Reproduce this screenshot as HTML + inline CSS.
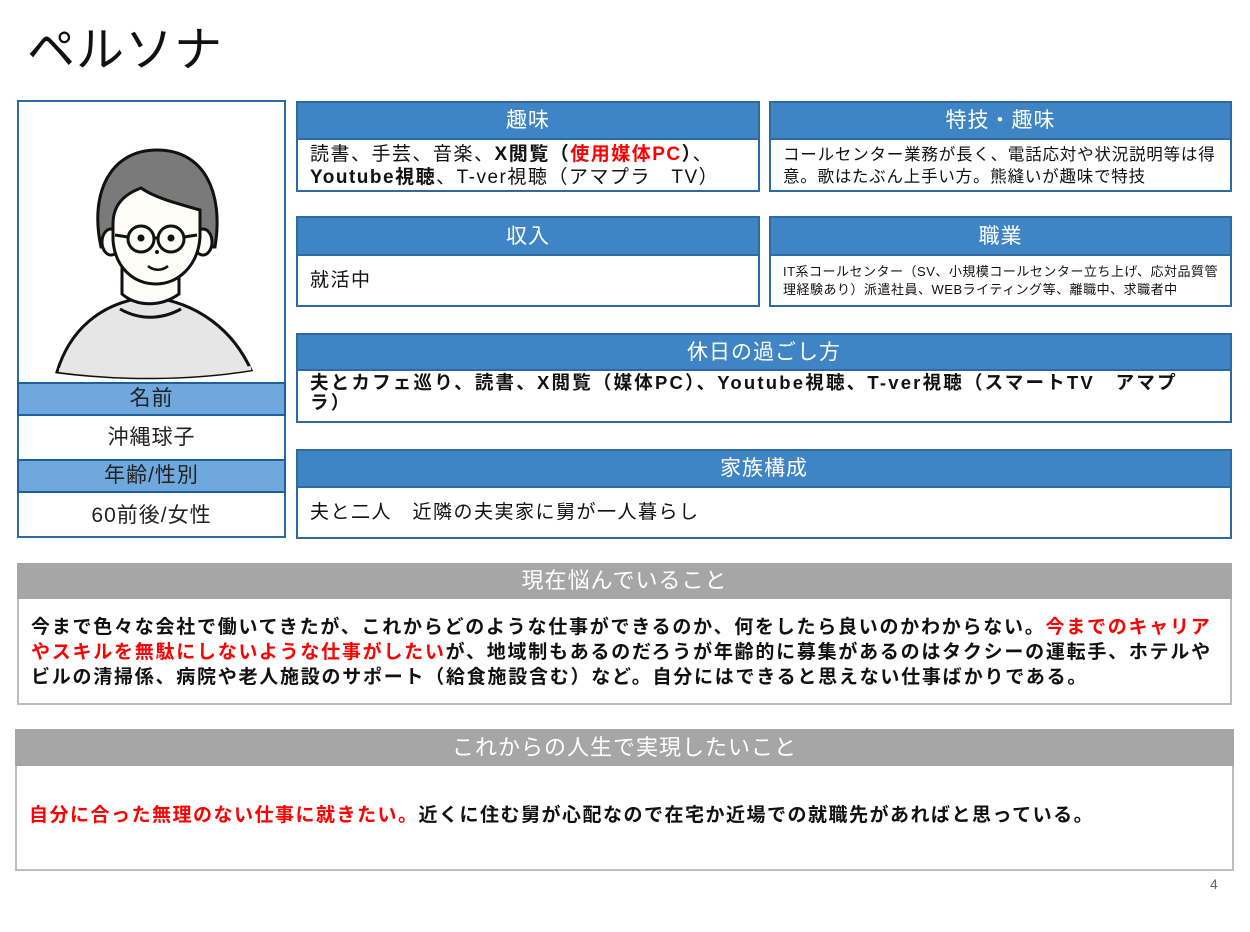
<!DOCTYPE html>
<html><head><meta charset="utf-8"><style>
*{margin:0;padding:0;box-sizing:border-box}
body{width:1250px;height:932px;background:#fff;position:relative;font-family:"Liberation Sans","Noto Sans CJK JP",sans-serif;color:#111;overflow:hidden}
.a{position:absolute}
.hd{position:absolute;background:#3f85c6;border:2px solid #2c69a5;color:#fff;font-size:21px;text-align:center;letter-spacing:1px}
.bd{position:absolute;border:2px solid #2c69a5;border-top:none;background:#fff;font-size:19px;line-height:23px;padding:0 12px;letter-spacing:1.5px}
.lh{position:absolute;left:17px;width:269px;background:#6fa8dc;border:2px solid #1f5f9e;font-size:21px;text-align:center;color:#222;letter-spacing:1px}
.lv{position:absolute;left:17px;width:269px;font-size:21px;text-align:center;color:#222;letter-spacing:1px}
.gh{position:absolute;background:#a6a6a6;color:#fff;font-size:22px;text-align:center;letter-spacing:1px}
.gb{position:absolute;border:2px solid #bdbdbd;border-top:none;background:#fff;font-weight:bold;font-size:19px;line-height:25px;letter-spacing:1.5px}
.r{color:#f00}
</style></head><body>
<div class="a" style="left:27px;top:10px;font-size:48px;color:#111;letter-spacing:1px">ペルソナ</div>

<div class="a" style="left:17px;top:100px;width:269px;height:438px;border:2px solid #2c69a5"></div>
<svg class="a" style="left:19px;top:102px" width="265" height="280" viewBox="0 0 265 280">
<path d="M38 270 C50 230 80 200 130 195 C180 200 215 230 232 268 C170 278 100 278 38 270Z" fill="#e6e6e6" stroke="#111" stroke-width="3"/>
<path d="M40 268 C100 276 170 276 232 266" fill="none" stroke="#e6e6e6" stroke-width="4"/>
<path d="M103 160 L103 192 C118 205 142 205 160 192 L160 160Z" fill="#fdfcf7" stroke="#111" stroke-width="3"/>
<path d="M101 207 C120 218 142 218 162 207" fill="none" stroke="#111" stroke-width="3"/>
<path d="M82 145 C70 90 92 48 138 48 C185 48 205 90 196 145 Z" fill="#7a7a7a" stroke="#111" stroke-width="3"/>
<ellipse cx="92" cy="140" rx="9" ry="13" fill="#fdfcf7" stroke="#111" stroke-width="3"/>
<ellipse cx="184" cy="140" rx="9" ry="13" fill="#fdfcf7" stroke="#111" stroke-width="3"/>
<path d="M94 122 C94 102 106 92 122 86 C136 96 160 102 181 108 L181 135 C179 165 158 182 137 182 C115 182 96 166 94 138Z" fill="#fdfcf7" stroke="#111" stroke-width="3"/>
<circle cx="122" cy="137" r="13" fill="none" stroke="#111" stroke-width="3"/>
<circle cx="152" cy="137" r="13" fill="none" stroke="#111" stroke-width="3"/>
<path d="M135 136 L139 136 M109 135 L96 133 M165 135 L178 133" stroke="#111" stroke-width="3"/>
<circle cx="122" cy="136" r="3.5" fill="#111"/><circle cx="152" cy="136" r="3.5" fill="#111"/>
<circle cx="138" cy="150" r="2" fill="#111"/>
<path d="M129 164 C135 169 143 169 149 164" fill="none" stroke="#111" stroke-width="2.5"/>
</svg>
<div class="lh" style="top:382px;height:34px;line-height:30px">名前</div>
<div class="lv" style="top:416px;height:44px;line-height:44px;border-left:2px solid #2c69a5;border-right:2px solid #2c69a5">沖縄球子</div>
<div class="lh" style="top:459px;height:34px;line-height:30px">年齢/性別</div>
<div class="lv" style="top:493px;height:45px;line-height:45px;border:2px solid #2c69a5;border-top:none">60前後/女性</div>

<div class="hd" style="left:296px;top:101px;width:464px;height:39px;line-height:36px">趣味</div>
<div class="bd" style="left:296px;top:140px;width:464px;height:52px;padding-top:3px">読書、手芸、音楽、<b>X閲覧（<span class="r">使用媒体PC</span>）</b>、<br><b>Youtube視聴</b>、T-ver視聴（アマプラ　TV）</div>
<div class="hd" style="left:769px;top:101px;width:463px;height:39px;line-height:36px">特技・趣味</div>
<div class="bd" style="left:769px;top:140px;width:463px;height:52px;font-size:16.5px;line-height:22px;padding-top:4px;letter-spacing:0.8px">コールセンター業務が長く、電話応対や状況説明等は得意。歌はたぶん上手い方。熊縫いが趣味で特技</div>

<div class="hd" style="left:296px;top:216px;width:464px;height:40px;line-height:37px">収入</div>
<div class="bd" style="left:296px;top:256px;width:464px;height:51px;line-height:50px">就活中</div>
<div class="hd" style="left:769px;top:216px;width:463px;height:40px;line-height:37px">職業</div>
<div class="bd" style="left:769px;top:256px;width:463px;height:51px;font-size:13px;line-height:18px;padding-top:7px;letter-spacing:0.5px">IT系コールセンター（SV、小規模コールセンター立ち上げ、応対品質管理経験あり）派遣社員、WEBライティング等、離職中、求職者中</div>

<div class="hd" style="left:296px;top:333px;width:936px;height:38px;line-height:35px">休日の過ごし方</div>
<div class="bd" style="left:296px;top:371px;width:936px;height:52px;font-weight:bold;line-height:20px;padding-top:2px;font-size:18.5px;letter-spacing:2.2px">夫とカフェ巡り、読書、X閲覧（媒体PC）、Youtube視聴、T-ver視聴（スマートTV　アマプ<br>ラ）</div>

<div class="hd" style="left:296px;top:449px;width:936px;height:39px;line-height:36px">家族構成</div>
<div class="bd" style="left:296px;top:488px;width:936px;height:51px;line-height:50px">夫と二人　近隣の夫実家に舅が一人暮らし</div>

<div class="gh" style="left:17px;top:563px;width:1215px;height:36px;line-height:36px">現在悩んでいること</div>
<div class="gb" style="left:17px;top:599px;width:1215px;height:106px;padding:16px 10px 0 12px;letter-spacing:1.75px">今まで色々な会社で働いてきたが、これからどのような仕事ができるのか、何をしたら良いのかわからない。<span class="r">今までのキャリアやスキルを無駄にしないような仕事がしたい</span>が、地域制もあるのだろうが年齢的に募集があるのはタクシーの運転手、ホテルやビルの清掃係、病院や老人施設のサポート（給食施設含む）など。自分にはできると思えない仕事ばかりである。</div>

<div class="gh" style="left:15px;top:729px;width:1219px;height:37px;line-height:37px">これからの人生で実現したいこと</div>
<div class="gb" style="left:15px;top:766px;width:1219px;height:105px;padding:37px 12px 0 12px"><span class="r">自分に合った無理のない仕事に就きたい。</span>近くに住む舅が心配なので在宅か近場での就職先があればと思っている。</div>

<div class="a" style="left:1210px;top:876px;font-size:14px;color:#666">4</div>
</body></html>
